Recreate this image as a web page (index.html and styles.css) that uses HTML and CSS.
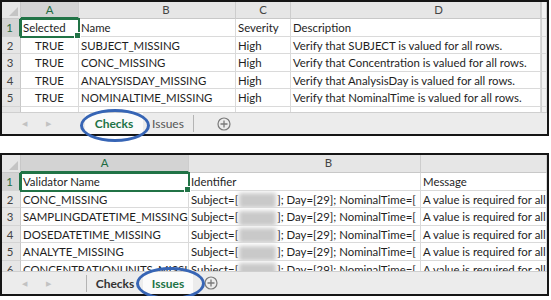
FILE: index.html
```html
<!DOCTYPE html>
<html lang="en">
  <head>
    <meta charset="UTF-8" />
    <meta name="viewport" content="width=device-width, initial-scale=1.0" />
    <title>Validator workbook - Checks and Issues</title>
    <link rel="stylesheet" href="styles.css">
  </head>
  <body>
    <!-- Checks sheet -->
    <div class="shot shot-checks">
      <div class="sheet sheet-checks">
        <div class="corner"></div>
        <div class="hd hd-sel">A</div>
        <div class="hd hd-b">B</div>
        <div class="hd">C</div>
        <div class="hd hd-d">D</div>
        <div class="hd edge"></div>

        <div class="rn rn-sel">1</div>
        <div class="cell sel">Selected</div>
        <div class="cell">Name</div>
        <div class="cell">Severity</div>
        <div class="cell">Description</div>
        <div class="cell edge"></div>

        <div class="rn">2</div>
        <div class="cell mid">TRUE</div>
        <div class="cell">SUBJECT_MISSING</div>
        <div class="cell">High</div>
        <div class="cell">Verify that SUBJECT is valued for all rows.</div>
        <div class="cell edge"></div>

        <div class="rn">3</div>
        <div class="cell mid">TRUE</div>
        <div class="cell">CONC_MISSING</div>
        <div class="cell">High</div>
        <div class="cell">Verify that Concentration is valued for all rows.</div>
        <div class="cell edge"></div>

        <div class="rn">4</div>
        <div class="cell mid">TRUE</div>
        <div class="cell">ANALYSISDAY_MISSING</div>
        <div class="cell">High</div>
        <div class="cell">Verify that AnalysisDay is valued for all rows.</div>
        <div class="cell edge"></div>

        <div class="rn">5</div>
        <div class="cell mid">TRUE</div>
        <div class="cell">NOMINALTIME_MISSING</div>
        <div class="cell">High</div>
        <div class="cell">Verify that NominalTime is valued for all rows.</div>
        <div class="cell edge"></div>

        <div class="rn">6</div>
        <div class="cell"></div>
        <div class="cell"></div>
        <div class="cell"></div>
        <div class="cell"></div>
        <div class="cell edge"></div>
      </div>
      <div class="tabbar">
        <span class="nav">&#9664;</span>
        <span class="nav">&#9654;</span>
        <span class="tab tab-checks active">Checks</span>
        <span class="tab tab-issues">Issues</span>
        <span class="sep"></span>
        <svg class="add add-checks" width="14" height="14" viewBox="0 0 14 14">
          <circle cx="7" cy="7" r="6" fill="none" stroke="#7a7a7a" stroke-width="1.2" />
          <path d="M7 3.5v7M3.5 7h7" stroke="#7a7a7a" stroke-width="1.3" />
        </svg>
      </div>
      <span class="ring ring-checks"></span>
    </div>

    <!-- Issues sheet -->
    <div class="shot shot-issues">
      <div class="sheet sheet-issues">
        <div class="corner"></div>
        <div class="hd hd-sel">A</div>
        <div class="hd hd-b2">B</div>
        <div class="hd"></div>

        <div class="rn rn-sel">1</div>
        <div class="cell sel">Validator Name</div>
        <div class="cell">Identifier</div>
        <div class="cell">Message</div>

        <div class="rn">2</div>
        <div class="cell">CONC_MISSING</div>
        <div class="cell">Subject=[<span class="blur"></span>]; Day=[29]; NominalTime=[</div>
        <div class="cell">A value is required for all rows.</div>

        <div class="rn">3</div>
        <div class="cell">SAMPLINGDATETIME_MISSING</div>
        <div class="cell">Subject=[<span class="blur"></span>]; Day=[29]; NominalTime=[</div>
        <div class="cell">A value is required for all rows.</div>

        <div class="rn">4</div>
        <div class="cell">DOSEDATETIME_MISSING</div>
        <div class="cell">Subject=[<span class="blur"></span>]; Day=[29]; NominalTime=[</div>
        <div class="cell">A value is required for all rows.</div>

        <div class="rn">5</div>
        <div class="cell">ANALYTE_MISSING</div>
        <div class="cell">Subject=[<span class="blur"></span>]; Day=[29]; NominalTime=[</div>
        <div class="cell">A value is required for all rows.</div>

        <div class="rn">6</div>
        <div class="cell">CONCENTRATIONUNITS_MISSING</div>
        <div class="cell">Subject=[<span class="blur"></span>]; Day=[29]; NominalTime=[</div>
        <div class="cell">A value is required for all rows.</div>
      </div>
      <div class="tabbar">
        <span class="nav">&#9664;</span>
        <span class="nav">&#9654;</span>
        <span class="sep sep-left"></span>
        <span class="tab tab-checks2">Checks</span>
        <span class="tab tab-issues active">Issues</span>
        <svg class="add add-issues" width="14" height="14" viewBox="0 0 14 14">
          <circle cx="7" cy="7" r="6" fill="none" stroke="#7a7a7a" stroke-width="1.2" />
          <path d="M7 3.5v7M3.5 7h7" stroke="#7a7a7a" stroke-width="1.3" />
        </svg>
      </div>
      <span class="ring ring-issues"></span>
    </div>
  </body>
</html>
```

FILE: styles.css
```css
* {
  margin: 0;
  padding: 0;
  box-sizing: border-box;
}
body {
  background-color: white;
  font-family: Lato, "Liberation Sans", sans-serif;
  font-size: 11.4px;
  color: #1e1e1e;
}
.shot {
  position: relative;
  width: 549px;
  border: 2px solid #151515;
  background-color: #f0f0f0;
}
.shot-checks {
  height: 136px;
}
.shot-issues {
  height: 143px;
  margin-top: 17px;
}
.sheet {
  display: grid;
  overflow: hidden;
  background-color: white;
}
.sheet-checks {
  grid-template-columns: 19px 58px 157px 55px 250px 1fr;
  grid-template-rows: 17px repeat(6, 17.5px);
  height: 110px;
}
.sheet-issues {
  grid-template-columns: 19px 168px 232px 1fr;
  grid-template-rows: 18px repeat(6, 17.5px);
  height: 116px;
}
.corner {
  background-color: #e6e6e6;
  border-right: 1px solid #c8c8c8;
  border-bottom: 1px solid #c8c8c8;
  position: relative;
}
.corner::after {
  content: "";
  position: absolute;
  right: 2px;
  bottom: 2px;
  border-left: 9px solid transparent;
  border-bottom: 9px solid #c4c4c4;
}
.hd {
  background-color: #e6e6e6;
  border-right: 1px solid #cdcdcd;
  border-bottom: 1px solid #c8c8c8;
  color: #444;
  text-align: center;
  line-height: 16px;
}
.hd-sel {
  background-color: #d3d3d3;
  color: #1f6b41;
  border-bottom: 2px solid #217346;
}
.hd-b {
  padding-left: 18px;
}
.hd-d {
  padding-left: 46px;
}
.hd-b2 {
  padding-left: 48px;
}
.rn {
  background-color: #e6e6e6;
  border-right: 1px solid #c8c8c8;
  border-bottom: 1px solid #d4d4d4;
  color: #444;
  text-align: center;
  line-height: 17px;
  padding-right: 2px;
}
.rn-sel {
  background-color: #d3d3d3;
  color: #1f6b41;
  border-right: 2px solid #217346;
}
.cell {
  border-right: 1px solid #dadada;
  border-bottom: 1px solid #dadada;
  padding: 0 2px;
  line-height: 18px;
  white-space: nowrap;
  overflow: hidden;
}
.mid {
  text-align: center;
}
.sel {
  position: relative;
  overflow: visible;
  outline: 2px solid #217346;
  outline-offset: -1px;
  z-index: 1;
}
.sel::after {
  content: "";
  position: absolute;
  right: -3px;
  bottom: -3px;
  width: 5px;
  height: 5px;
  background-color: #217346;
  border: 1px solid white;
}
.edge {
  background-color: #f2f2f2;
  border-left: 1px solid #d0d0d0;
}
.blur {
  display: inline-block;
  width: 37px;
  height: 15px;
  margin: 0 1px;
  vertical-align: middle;
  background-color: #c9c9c9;
  filter: blur(2px);
}
.tabbar {
  display: flex;
  align-items: center;
  border-top: 1px solid #cfcfcf;
  background-color: #ececec;
  padding-left: 10px;
}
.shot-checks .tabbar {
  height: 22px;
}
.shot-issues .tabbar {
  height: 23px;
}
.nav {
  width: 24px;
  text-align: center;
  font-size: 7px;
  color: #c2c2c2;
}
.tab {
  height: 100%;
  display: flex;
  align-items: center;
  justify-content: center;
  font-size: 12px;
  color: #555;
}
.tab.active {
  background-color: #fbfbfb;
  color: #217346;
  font-weight: bold;
}
.tab-checks {
  width: 58px;
  margin-left: 25px;
}
.tab-issues {
  width: 50px;
}
.tab-checks2 {
  width: 56px;
  color: #333;
  font-weight: bold;
}
.sep {
  width: 1px;
  height: 17px;
  background-color: #b4b4b4;
}
.sep-left {
  margin-left: 26px;
}
.add-checks {
  margin-left: 23px;
}
.add-issues {
  margin-left: 11px;
}
.ring {
  position: absolute;
  border: 3px solid #3765b5;
  border-radius: 50%;
  z-index: 2;
}
.ring-checks {
  left: 78px;
  top: 107px;
  width: 70px;
  height: 33px;
}
.ring-issues {
  left: 134px;
  top: 112px;
  width: 69px;
  height: 33px;
}
```
